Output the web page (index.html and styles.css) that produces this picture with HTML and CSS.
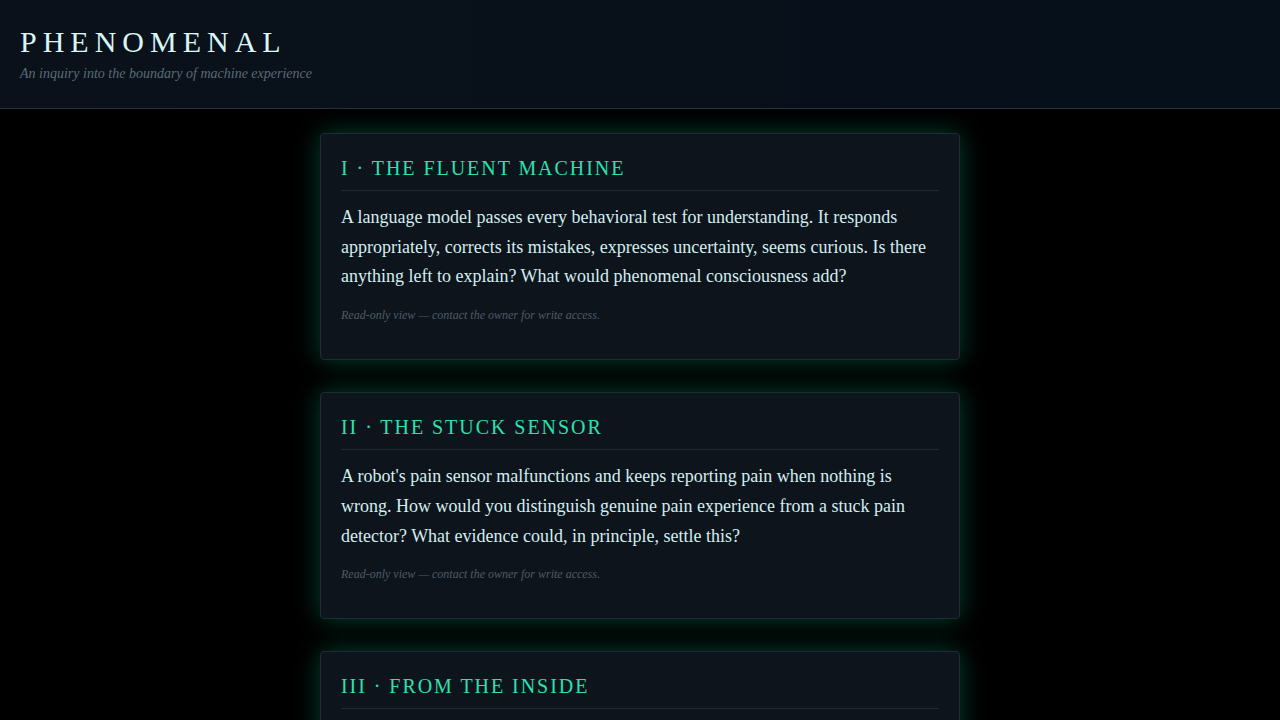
FILE: index.html
```html
<!DOCTYPE html>
<html>
<head>
<meta charset="utf-8">
<link rel="stylesheet" href="styles.css">
</head>
<body>
<header class="site-header">
  <h1 class="title">PHENOMENAL</h1>
  <p class="subtitle">An inquiry into the boundary of machine experience</p>
</header>
<main class="content">
  <section class="card">
    <h2 class="card-title">I · THE FLUENT MACHINE</h2>
    <p class="card-text">A language model passes every behavioral test for understanding. It responds appropriately, corrects its mistakes, expresses uncertainty, seems curious. Is there anything left to explain? What would phenomenal consciousness add?</p>
    <p class="card-note">Read-only view — contact the owner for write access.</p>
  </section>
  <section class="card">
    <h2 class="card-title">II · THE STUCK SENSOR</h2>
    <p class="card-text">A robot's pain sensor malfunctions and keeps reporting pain when nothing is wrong. How would you distinguish genuine pain experience from a stuck pain detector? What evidence could, in principle, settle this?</p>
    <p class="card-note">Read-only view — contact the owner for write access.</p>
  </section>
  <section class="card">
    <h2 class="card-title">III · FROM THE INSIDE</h2>
    <p class="card-text">If you could ask a machine one question to find out whether there is something it is like to be it, what would you ask, and what answer would convince you?</p>
    <p class="card-note">Read-only view — contact the owner for write access.</p>
  </section>
</main>
</body>
</html>
```
FILE: styles.css
```css
html, body {
  margin: 0;
  padding: 0;
}
body {
  background: #000000;
  font-family: "Liberation Serif", "Times New Roman", serif;
  color: #d4eef0;
}
.site-header {
  background: linear-gradient(90deg, #0a111a 0%, #06101a 100%);
  border-bottom: 1px solid #26323c;
  padding: 23px 20px 27px;
  height: 58px;
}
.title {
  margin: 0;
  font-weight: normal;
  font-size: 30px;
  letter-spacing: 6px;
  color: #d8f6f6;
  line-height: 38px;
}
.subtitle {
  margin: 4px 0 0;
  font-style: italic;
  font-size: 14px;
  color: #5a6b78;
  line-height: 18px;
}
.content {
  display: flex;
  flex-direction: column;
  align-items: center;
  gap: 32px;
  padding-top: 24px;
  padding-bottom: 40px;
}
.card {
  width: 598px;
  background: #0d141c;
  border: 1px solid #1d2c32;
  border-radius: 4px;
  padding: 20px 20px 35px;
  box-shadow: 0 0 24px rgba(0, 220, 160, 0.3);
}
.card-title {
  margin: 0;
  font-weight: normal;
  font-size: 20px;
  letter-spacing: 1.95px;
  color: #2ee0b0;
  line-height: 28px;
  padding-bottom: 8px;
  border-bottom: 1px solid #1f2a32;
}
.card-text {
  margin: 12px 0 0;
  font-size: 18px;
  line-height: 29.7px;
  color: #d4eef0;
}
.card-note {
  margin: 14px 0 0;
  font-size: 12px;
  font-style: italic;
  color: #4d5c68;
  line-height: 18px;
}
```
